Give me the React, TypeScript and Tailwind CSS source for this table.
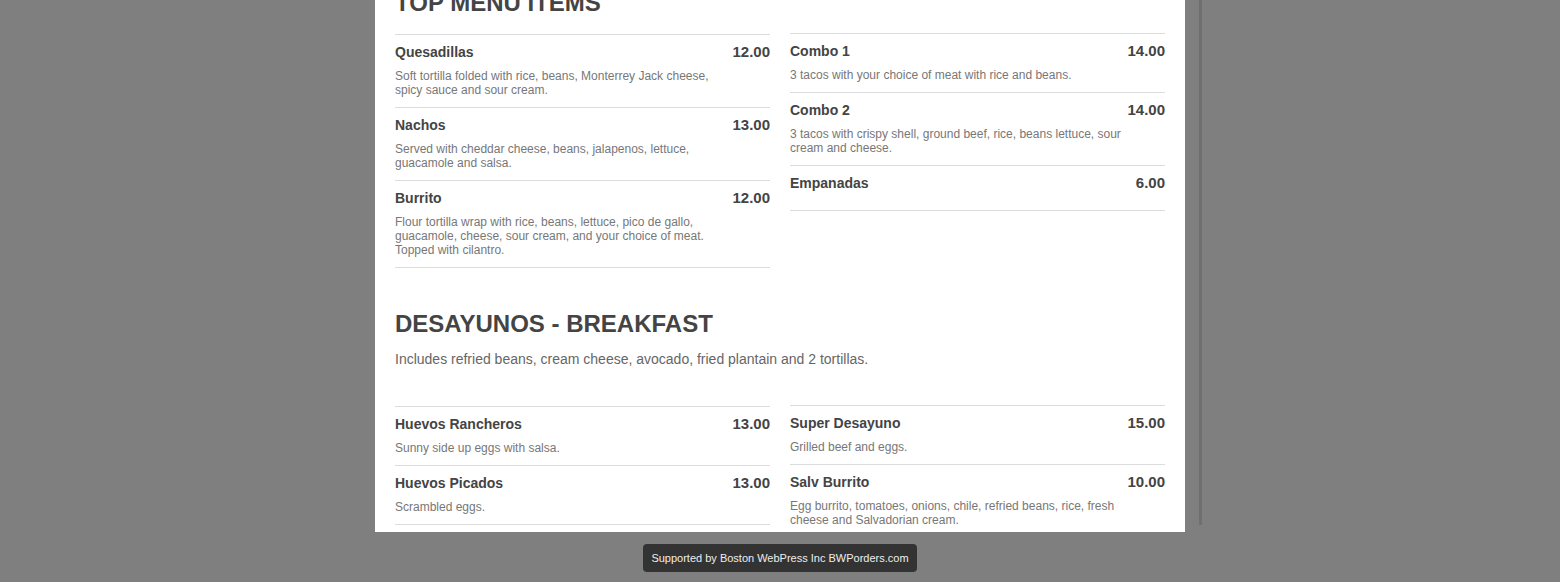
type Item = { name: string; price: string; desc?: string }

const topLeft: Item[] = [
  { name: 'Quesadillas', price: '12.00', desc: 'Soft tortilla folded with rice, beans, Monterrey Jack cheese, spicy sauce and sour cream.' },
  { name: 'Nachos', price: '13.00', desc: 'Served with cheddar cheese, beans, jalapenos, lettuce, guacamole and salsa.' },
  { name: 'Burrito', price: '12.00', desc: 'Flour tortilla wrap with rice, beans, lettuce, pico de gallo, guacamole, cheese, sour cream, and your choice of meat. Topped with cilantro.' },
]

const topRight: Item[] = [
  { name: 'Combo 1', price: '14.00', desc: '3 tacos with your choice of meat with rice and beans.' },
  { name: 'Combo 2', price: '14.00', desc: '3 tacos with crispy shell, ground beef, rice, beans lettuce, sour cream and cheese.' },
  { name: 'Empanadas', price: '6.00' },
]

const breakfastLeft: Item[] = [
  { name: 'Huevos Rancheros', price: '13.00', desc: 'Sunny side up eggs with salsa.' },
  { name: 'Huevos Picados', price: '13.00', desc: 'Scrambled eggs.' },
]

const breakfastRight: Item[] = [
  { name: 'Super Desayuno', price: '15.00', desc: 'Grilled beef and eggs.' },
  { name: 'Salv Burrito', price: '10.00', desc: 'Egg burrito, tomatoes, onions, chile, refried beans, rice, fresh cheese and Salvadorian cream.' },
]

function MenuItem({ item }: { item: Item }) {
  return (
    <div className="border-t border-[#dddddd] pt-[7px] pb-[10px]">
      <div className="flex h-5 items-center justify-between text-[#444]">
        <span className="text-[14px] font-bold">{item.name}</span>
        <span className="text-[15px] font-bold">{item.price}</span>
      </div>
      <p className="mt-[7px] max-w-[90%] text-[12px] leading-[14px] text-[#777]">{item.desc}</p>
    </div>
  )
}

function Column({ items, right }: { items: Item[]; right?: boolean }) {
  return (
    <div className={right ? '-mt-px' : ''}>
      <div className="border-b border-[#dddddd]">
        {items.map((it) => (
          <MenuItem key={it.name} item={it} />
        ))}
      </div>
    </div>
  )
}

function Section({ title, intro, left, right }: { title: string; intro?: string; left: Item[]; right: Item[] }) {
  return (
    <section className="mb-[41px]">
      <h2 className="text-[24px] leading-[30px] font-bold uppercase text-[#444]">{title}</h2>
      {intro && <p className="mt-[10px] mb-[37px] text-[14px] leading-5 text-[#666]">{intro}</p>}
      <div className="mt-4 grid grid-cols-2 items-start gap-x-5">
        <Column items={left} />
        <Column items={right} right />
      </div>
    </section>
  )
}

export default function App() {
  return (
    <div className="relative h-[582px] overflow-hidden bg-[#7f7f7f] font-['Liberation_Sans',Arial,sans-serif]">
      <div className="absolute left-[1199px] top-0 h-[525px] w-[3px] bg-[#6f6f6f]" />
      <div className="mx-auto h-[532px] w-[810px] overflow-hidden bg-white">
        <div className="-mt-[12px] px-5">
          <Section title="Top Menu Items" left={topLeft} right={topRight} />
          <Section
            title="Desayunos - Breakfast"
            intro="Includes refried beans, cream cheese, avocado, fried plantain and 2 tortillas."
            left={breakfastLeft}
            right={breakfastRight}
          />
        </div>
      </div>
      <div className="flex justify-center pt-3">
        <div className="rounded bg-[#333] px-2 py-[7px] text-[11px] leading-[14px] text-[#eee]">
          Supported by Boston WebPress Inc BWPorders.com
        </div>
      </div>
    </div>
  )
}
